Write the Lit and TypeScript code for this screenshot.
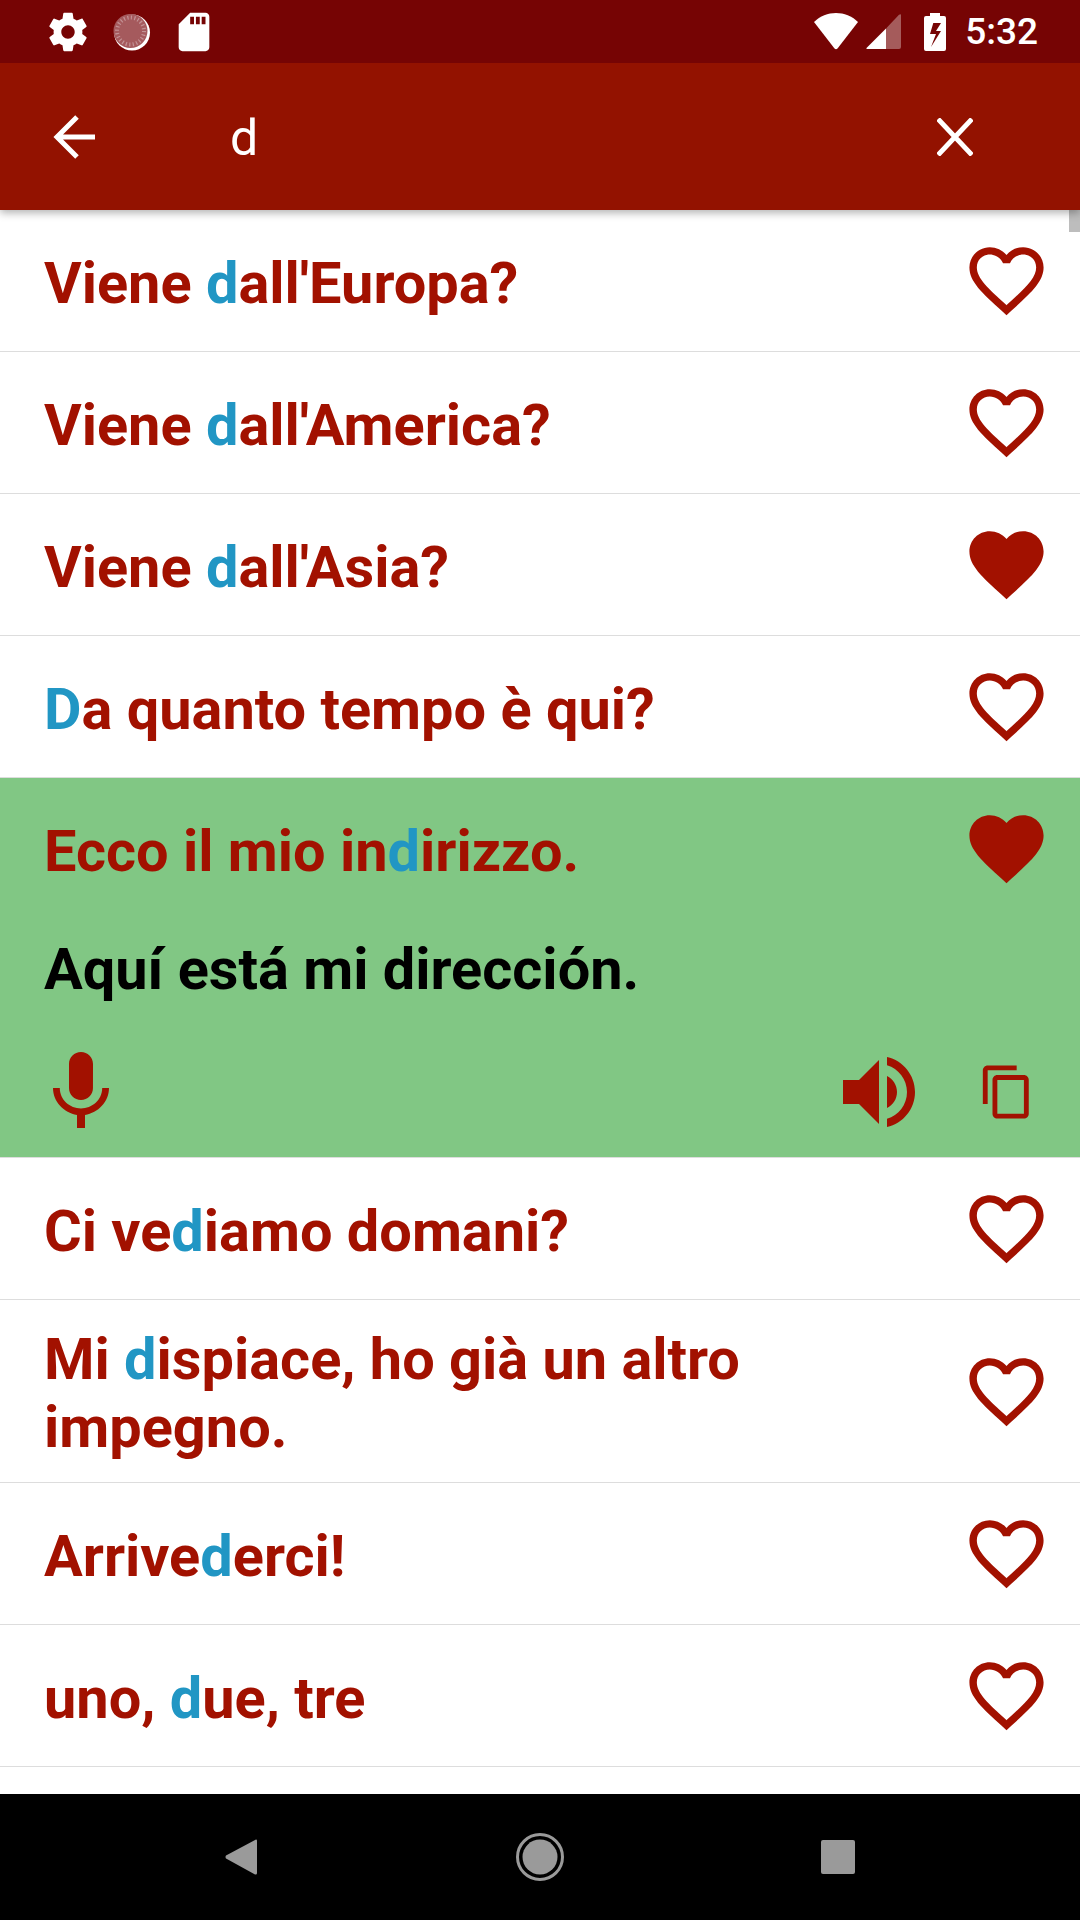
import { LitElement, html, css, svg } from 'lit';
import { customElement } from 'lit/decorators.js';

const HEART_OUTLINE = svg`<path d="M16.5 3c-1.74 0-3.41.81-4.5 2.09C10.91 3.81 9.24 3 7.5 3 4.42 3 2 5.42 2 8.5c0 3.78 3.4 6.86 8.55 11.54L12 21.35l1.45-1.32C18.6 15.36 22 12.28 22 8.5 22 5.42 19.58 3 16.5 3zm-4.4 15.55l-.1.1-.1-.1C7.14 14.24 4 11.39 4 8.5 4 6.5 5.5 5 7.5 5c1.54 0 3.04.99 3.57 2.36h1.87C13.46 5.99 14.96 5 16.5 5c2 0 3.5 1.5 3.5 3.5 0 2.89-3.14 5.74-7.9 10.05z"/>`;
const HEART_FULL = svg`<path d="M12 21.35l-1.45-1.32C5.4 15.36 2 12.28 2 8.5 2 5.42 4.42 3 7.5 3c1.74 0 3.41.81 4.5 2.09C13.09 3.81 14.76 3 16.5 3 19.58 3 22 5.42 22 8.5c0 3.78-3.4 6.86-8.55 11.54L12 21.35z"/>`;

interface Phrase {
  parts: [string, string, string];
  fav?: boolean;
  open?: string;
}

const PHRASES: Phrase[] = [
  { parts: ['Viene ', 'd', "all'Europa?"] },
  { parts: ['Viene ', 'd', "all'America?"] },
  { parts: ['Viene ', 'd', "all'Asia?"], fav: true },
  { parts: ['', 'D', 'a quanto tempo è qui?'] },
  { parts: ['Ecco il mio in', 'd', 'irizzo.'], fav: true, open: 'Aquí está mi dirección.' },
  { parts: ['Ci ve', 'd', 'iamo domani?'] },
  { parts: ['Mi ', 'd', 'ispiace, ho già un altro impegno.'] },
  { parts: ['Arrive', 'd', 'erci!'] },
  { parts: ['uno, ', 'd', 'ue, tre'] },
];

@customElement('app-root')
export class AppRoot extends LitElement {
  static styles = css`
    :host {
      display: flex;
      flex-direction: column;
      width: 1080px;
      height: 1920px;
      background: #fff;
      font-family: Roboto, sans-serif;
      overflow: hidden;
    }

    svg {
      display: block;
      flex: none;
    }

    .status {
      height: 63px;
      flex: none;
      background: #760404;
      display: flex;
      align-items: center;
      fill: #fff;
      color: #fff;
      position: relative;
      z-index: 2;
    }

    .status .gear {
      margin-left: 45px;
    }

    .status .disc {
      margin-left: 22px;
    }

    .status .sd {
      margin-left: 20px;
    }

    .status .wifi {
      margin-left: auto;
    }

    .status .signal {
      margin-left: 8px;
    }

    .status .battery {
      margin-left: 23px;
    }

    .clock {
      font-size: 37px;
      font-weight: 500;
      margin-left: 19px;
      margin-right: 42px;
      line-height: 63px;
    }

    .toolbar {
      height: 147px;
      flex: none;
      background: #931200;
      color: #fff;
      display: flex;
      align-items: center;
      position: relative;
      z-index: 1;
      box-shadow: 0 3px 8px rgba(0, 0, 0, 0.3);
    }

    .toolbar .back {
      margin-left: 50px;
    }

    .query {
      flex: 1;
      font-size: 50px;
      margin-left: 132px;
      padding-top: 2px;
      line-height: 60px;
    }

    .toolbar .close {
      margin-right: 107px;
    }

    .list {
      flex: 1;
      position: relative;
      overflow: hidden;
    }

    .thumb {
      position: absolute;
      top: 0;
      right: 0;
      width: 11px;
      height: 22px;
      background: #bdbdbd;
    }

    .row {
      display: flex;
      align-items: center;
      min-height: 141px;
      padding-left: 44px;
      border-bottom: 1px solid #ddd;
      box-sizing: content-box;
      fill: #a21100;
    }

    .text {
      flex: 1;
      font-size: 57.7px;
      font-weight: 700;
      line-height: 68px;
      color: #a21100;
      padding: 25px 0 21px;
    }

    .text b {
      font-weight: 700;
      color: #2196c4;
    }

    .row .heart {
      margin: 0 29px 0 60px;
    }

    .open {
      background: #81c784;
      fill: #a21100;
      border-bottom: 1px solid #ddd;
    }

    .open .row {
      border-bottom: none;
    }

    .spanish {
      font-size: 57.7px;
      font-weight: 700;
      line-height: 68px;
      color: #000;
      padding-left: 44px;
      margin-top: 16px;
    }

    .actions {
      display: flex;
      align-items: center;
      margin-top: 41px;
      padding: 0 44px 17px 33px;
    }

    .actions .speaker {
      margin-left: auto;
      margin-right: 51px;
    }

    .nav {
      height: 126px;
      flex: none;
      background: #000;
      display: flex;
      align-items: center;
      padding-left: 225px;
      fill: #9a9a9a;
    }

    .nav .home {
      margin-left: 259px;
    }

    .nav .recents {
      margin-left: 257px;
    }
  `;

  renderText(p: Phrase) {
    return html`<div class="text">${p.parts[0]}<b>${p.parts[1]}</b>${p.parts[2]}</div>`;
  }

  renderRow(p: Phrase) {
    return html`
      <div class="row">
        ${this.renderText(p)}
        <svg class="heart" width="89" height="89" viewBox="0 0 24 24">${p.fav ? HEART_FULL : HEART_OUTLINE}</svg>
      </div>
    `;
  }

  renderOpen(p: Phrase) {
    return html`
      <div class="open">
        ${this.renderRow(p)}
        <div class="spanish">${p.open}</div>
        <div class="actions">
          <svg width="96" height="96" viewBox="0 0 24 24"><path d="M12 14c1.66 0 2.99-1.34 2.99-3L15 5c0-1.66-1.34-3-3-3S9 3.34 9 5v6c0 1.66 1.34 3 3 3zm5.3-3c0 3-2.54 5.1-5.3 5.1S6.7 14 6.7 11H5c0 3.41 2.72 6.23 6 6.72V21h2v-3.28c3.28-.48 6-3.3 6-6.72h-1.7z"/></svg>
          <svg class="speaker" width="96" height="96" viewBox="0 0 24 24"><path d="M3 9v6h4l5 5V4L7 9H3zm13.5 3c0-1.77-1.02-3.29-2.5-4.03v8.05c1.48-.73 2.5-2.25 2.5-4.02zM14 3.23v2.06c2.89.86 5 3.54 5 6.71s-2.11 5.85-5 6.71v2.06c4.01-.91 7-4.49 7-8.77s-2.99-7.86-7-8.77z"/></svg>
          <svg width="58" height="58" viewBox="0 0 24 24"><path d="M16 1H4c-1.1 0-2 .9-2 2v14h2V3h12V1zm3 4H8c-1.1 0-2 .9-2 2v14c0 1.1.9 2 2 2h11c1.1 0 2-.9 2-2V7c0-1.1-.9-2-2-2zm0 16H8V7h11v14z"/></svg>
        </div>
      </div>
    `;
  }

  render() {
    return html`
      <div class="status">
        <svg class="gear" width="46" height="46" viewBox="0 0 24 24"><path d="M19.43 12.98c.04-.32.07-.64.07-.98s-.03-.66-.07-.98l2.11-1.65c.19-.15.24-.42.12-.64l-2-3.46c-.12-.22-.39-.3-.61-.22l-2.49 1c-.52-.4-1.08-.73-1.69-.98l-.38-2.65C14.46 2.18 14.25 2 14 2h-4c-.25 0-.46.18-.49.42l-.38 2.65c-.61.25-1.17.59-1.69.98l-2.49-1c-.23-.09-.49 0-.61.22l-2 3.46c-.13.22-.07.49.12.64l2.11 1.65c-.04.32-.07.65-.07.98s.03.66.07.98l-2.11 1.65c-.19.15-.24.42-.12.64l2 3.46c.12.22.39.3.61.22l2.49-1c.52.4 1.08.73 1.69.98l.38 2.65c.03.24.24.42.49.42h4c.25 0 .46-.18.49-.42l.38-2.65c.61-.25 1.17-.59 1.69-.98l2.49 1c.23.09.49 0 .61-.22l2-3.46c.12-.22.07-.49-.12-.64l-2.11-1.65zM12 15.5c-1.93 0-3.5-1.57-3.5-3.5s1.57-3.5 3.5-3.5 3.5 1.57 3.5 3.5-1.57 3.5-3.5 3.5z"/></svg>
        <svg class="disc" width="38" height="38" viewBox="0 0 38 38">
          <circle cx="19" cy="19.500" r="18" fill="#fff"/>
          <circle cx="17.500" cy="18" r="17" fill="#a55a5d"/>
          <circle cx="17.500" cy="18" r="13.500" fill="none" stroke="#c39396" stroke-width="4" stroke-dasharray="1.200 2.330"/>
        </svg>
        <svg class="sd" width="46" height="46" viewBox="0 0 24 24"><path d="M18 2h-8L4.020 8 4 20c0 1.100.9 2 2 2h12c1.100 0 2-.9 2-2V4c0-1.100-.9-2-2-2zm-6 6h-2V4h2v4zm3 0h-2V4h2v4zm3 0h-2V4h2v4z"/></svg>
        <svg class="wifi" width="44" height="37" viewBox="0 0 44 37"><path d="M0 9 C6 3 14 0 22 0 S38 3 44 9 L23.500 35.500 Q22 37 20.500 35.500 Z"/></svg>
        <svg class="signal" width="35" height="35" viewBox="0 0 35 35">
          <path d="M20 14.500 V35 H1 Q0 35 .5 34 Z"/>
          <path d="M20 14.500 L33 .8 Q35 -.5 35 1 V33 Q35 35 33 35 H20 Z" fill="#fff" fill-opacity=".35"/>
        </svg>
        <svg class="battery" width="22" height="38" viewBox="0 0 22 38"><path fill-rule="evenodd" d="M6 0 H16 V3 H20 Q22 3 22 5 V36 Q22 38 20 38 H2 Q0 38 0 36 V5 Q0 3 2 3 H6 Z M9.300 10 L17 10 L12 18 L17 18 L7 34 L12 21 L6 21 Z"/></svg>
        <span class="clock">5:32</span>
      </div>
      <div class="toolbar">
        <svg class="back" width="48" height="48" viewBox="0 0 48 48" fill="none" stroke="#fff" stroke-width="5"><path d="M45 24 H9 M27 4 L7 24 L27 44"/></svg>
        <div class="query">d</div>
        <svg class="close" width="36" height="38" viewBox="0 0 36 38" fill="none" stroke="#fff" stroke-width="5"><path d="M1 1 L35 37 M35 1 L1 37"/></svg>
      </div>
      <div class="list">
        ${PHRASES.map((p) => (p.open ? this.renderOpen(p) : this.renderRow(p)))}
        <div class="thumb"></div>
      </div>
      <div class="nav">
        <svg width="32" height="36" viewBox="0 0 32 36"><path d="M31 0.500 Q32 0 32 2 V34 Q32 36 30 35.500 L1 19.500 Q0 18 1 16.500 Z"/></svg>
        <svg class="home" width="48" height="48" viewBox="0 0 48 48"><circle cx="24" cy="24" r="22.500" fill="none" stroke="#9a9a9a" stroke-width="3"/><circle cx="24" cy="24" r="17.500"/></svg>
        <svg class="recents" width="34" height="34" viewBox="0 0 34 34"><rect width="34" height="34" rx="2"/></svg>
      </div>
    `;
  }
}
